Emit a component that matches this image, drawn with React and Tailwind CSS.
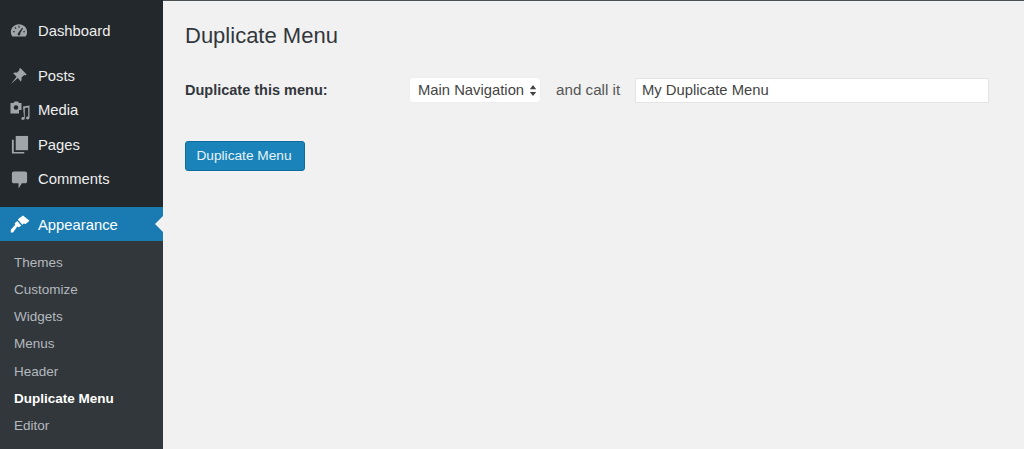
import React from 'react'

const font = "font-['Liberation_Sans',Arial,sans-serif]"

const DashboardIcon = () => (
  <svg viewBox="0 0 20 20" className="w-[18px] h-[18px] fill-[#a0a5aa]">
    <path fillRule="evenodd" d="M10 2.500C4.600 2.500 1 6.600 1 11c0 2 .6 3.700 1.600 5h14.800c1-1.300 1.600-3 1.600-5 0-4.400-3.600-8.500-9-8.500zM9.400 4.300h1.200v2H9.400zM5 6.200l1-.7 1.200 1.600-1 .7zM3.300 10.300h2v1.200h-2zM14.700 10.300h2v1.200h-2zM13.400 6.500l1 .7-3.100 5.300c.5.900 0 2.500-1.300 2.500-1.500 0-2-1.900-.9-2.800z" />
  </svg>
)

const PinIcon = () => (
  <svg viewBox="0 0 20 20" className="w-[18px] h-[18px] fill-[#a0a5aa]">
    <path d="M11.800 1.500l6.700 6.700-1.500 1.300-1.200-.6-3.200 3c.6 1.500.3 3-.6 4.100L8.700 12.200 1 19l6.300-8.200-3.800-3.800c1.100-.9 2.600-1.200 4.100-.6l3-3.200-.6-1.200z" />
  </svg>
)

const MediaIcon = () => (
  <svg viewBox="0 0 20 20" className="w-[20px] h-[20px] fill-[#a0a5aa]">
    <path fillRule="evenodd" d="M.5 2h3l1-1.500h3.500L9 2h2.500v7H9v3.500H.5zM6 4.200a2.300 2.300 0 100 4.600 2.300 2.300 0 000-4.600z" />
    <path d="M13 5.500l6.500-1v12.300c0 1.100-1 1.700-2 1.700s-1.500-.6-1.500-1.400c0-.9.900-1.600 2-1.600h.2V6.600l-3.400.5v10.200c0 1.100-1 1.700-2 1.700s-1.500-.6-1.500-1.400c0-.9.900-1.600 2-1.600h.7z" />
  </svg>
)

const PagesIcon = () => (
  <svg viewBox="0 0 20 20" className="w-[19px] h-[19px] fill-[#a0a5aa]">
    <path d="M6 1h13v15H6z" />
    <path d="M2 5h2v13h11v1.500H2z" />
  </svg>
)

const CommentIcon = () => (
  <svg viewBox="0 0 20 20" className="w-[19px] h-[19px] fill-[#a0a5aa]">
    <path d="M4 1.500h12c1.100 0 2 .9 2 2v8.500c0 1.100-.9 2-2 2h-3.500L9 19.500V14H4c-1.100 0-2-.9-2-2V3.500c0-1.100.9-2 2-2z" />
  </svg>
)

const BrushIcon = () => (
  <svg viewBox="0 0 20 20" className="w-[20px] h-[20px] fill-white">
    <path d="M8.500 4.800L13 1.500l6.500 5.300-3.800 3.200-2-.6-1.300 1.400-4.400-5z" />
    <path d="M7.300 7l4 4.800-2.600 1.400-1.400-.8L3 18.500H.8v-2.800l4.400-5-.5-1.400z" />
  </svg>
)

const mainItems = [
  { label: 'Posts', icon: <PinIcon /> },
  { label: 'Media', icon: <MediaIcon /> },
  { label: 'Pages', icon: <PagesIcon /> },
  { label: 'Comments', icon: <CommentIcon /> },
]

const subItems = ['Themes', 'Customize', 'Widgets', 'Menus', 'Header', 'Duplicate Menu', 'Editor']

const MenuRow = ({ icon, label }) => (
  <div className="flex items-center h-[34.300px] text-[14.800px] text-[#eeeeee]">
    <div className="w-[38px] pl-[10px] flex items-center shrink-0">{icon}</div>
    <span>{label}</span>
  </div>
)

const Sidebar = () => (
  <aside className="w-[163px] shrink-0 bg-[#23282d] flex flex-col pt-[14px]">
    <MenuRow icon={<DashboardIcon />} label="Dashboard" />
    <div className="h-[10.800px]" />
    {mainItems.map((item) => (
      <MenuRow key={item.label} icon={item.icon} label={item.label} />
    ))}
    <div className="h-[11px]" />
    <div className="relative flex items-center h-[34px] bg-[#1a7bb3] text-[14.800px] text-white">
      <div className="w-[38px] pl-[10px] flex items-center shrink-0"><BrushIcon /></div>
      <span className="pt-px">Appearance</span>
      <div className="absolute right-0 top-[9px] border-y-[8px] border-r-[8px] border-y-transparent border-r-[#f1f1f1]" />
    </div>
    <div className="flex-1 bg-[#32373c] pt-[7.800px] text-[13.500px]">
      {subItems.map((label) => (
        <div
          key={label}
          className={`h-[27.300px] flex items-center pl-[14px] ${label === 'Duplicate Menu' ? 'text-white font-bold' : 'text-[#b4b9be]'}`}
        >
          {label}
        </div>
      ))}
    </div>
  </aside>
)

const Content = () => (
  <main className="flex-1 bg-[#f1f1f1] border-t border-t-[#4a4f54] pl-[22px] pr-[35px] text-[#444444]">
    <h1 className="mt-[21px] text-[22px] leading-[28px] text-[#32373c]">Duplicate Menu</h1>
    <div className="mt-[27px] flex items-center h-[26px] text-[14.800px]">
      <label className="w-[224px] shrink-0 pt-px text-[14.500px] font-bold text-[#32373c]">Duplicate this menu:</label>
      <div className="w-[132px] h-[26px] shrink-0 bg-white rounded-[4px] flex items-center justify-between pl-[8px] pr-[3px] text-[#444444] border border-[#eeeeee]">
        <span>Main Navigation</span>
        <svg viewBox="0 0 8 12" className="w-[8px] h-[11px] fill-[#444444]">
          <path d="M4 0l3.500 4.500h-7zM4 12L.5 7.500h7z" />
        </svg>
      </div>
      <span className="ml-[15px] w-[79px] shrink-0 text-[15.200px] text-[#555555]">and call it</span>
      <div className="flex-1 h-[25px] bg-white border border-[#e4e4e4] flex items-center pl-[6px]">My Duplicate Menu</div>
    </div>
    <button className="mt-[38px] block w-[120px] h-[30px] pr-[2px] bg-[#1a84ba] border border-[#0f6d9c] rounded-[3px] text-[13.700px] text-[#e8f3f8]">
      Duplicate Menu
    </button>
  </main>
)

export default function App() {
  return (
    <div className={`flex w-[1024px] h-[449px] overflow-hidden ${font}`}>
      <Sidebar />
      <Content />
    </div>
  )
}
